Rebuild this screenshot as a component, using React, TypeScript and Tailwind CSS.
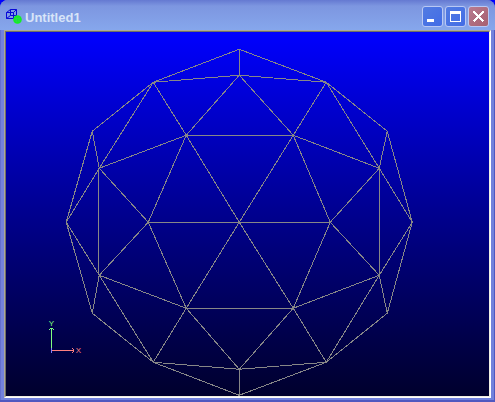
import type { ReactNode } from "react";

type Point = [number, number];

const rim: Point[] = [
  [239, 49], [326, 82], [387, 131], [412, 222], [387, 313], [326, 362],
  [239, 395], [153, 362], [92, 313], [66, 222], [92, 131], [153, 82], [239, 49],
];

const edges: [Point, Point][] = [
  [[239, 49], [239, 75]],
  [[153, 82], [239, 75]],
  [[326, 82], [239, 75]],
  [[239, 75], [186, 135]],
  [[239, 75], [293, 135]],
  [[153, 82], [186, 135]],
  [[326, 82], [293, 135]],
  [[186, 135], [293, 135]],
  [[153, 82], [99, 168]],
  [[326, 82], [379, 168]],
  [[92, 131], [99, 168]],
  [[387, 131], [379, 168]],
  [[99, 168], [186, 135]],
  [[379, 168], [293, 135]],
  [[98, 168], [98, 275]],
  [[379, 168], [379, 275]],
  [[99, 168], [66, 222]],
  [[379, 168], [412, 222]],
  [[99, 168], [148, 222]],
  [[379, 168], [330, 222]],
  [[186, 135], [148, 222]],
  [[293, 135], [330, 222]],
  [[186, 135], [239, 222]],
  [[293, 135], [239, 222]],
  [[148, 222], [330, 222]],
  [[66, 222], [99, 275]],
  [[412, 222], [379, 275]],
  [[148, 222], [99, 275]],
  [[330, 222], [379, 275]],
  [[148, 222], [186, 308]],
  [[330, 222], [293, 308]],
  [[239, 222], [186, 308]],
  [[239, 222], [293, 308]],
  [[99, 275], [92, 313]],
  [[379, 275], [387, 313]],
  [[99, 275], [186, 308]],
  [[379, 275], [293, 308]],
  [[99, 275], [153, 362]],
  [[379, 275], [326, 362]],
  [[186, 308], [293, 308]],
  [[186, 308], [153, 362]],
  [[293, 308], [326, 362]],
  [[186, 308], [239, 369]],
  [[293, 308], [239, 369]],
  [[153, 362], [239, 369]],
  [[326, 362], [239, 369]],
  [[239, 369], [239, 395]],
];

function DocumentIcon() {
  return (
    <svg className="size-4 shrink-0" viewBox="0 0 16 16" aria-hidden="true">
      <path
        d="M.5 4.5h7v6h-7zM4.5 1.5h6v6h-6zM.5 4.5l4-3M7.5 4.5l3-3M.5 10.5l4-3M7.5 10.5l3-3"
        fill="none"
        stroke="#0808d8"
      />
      <circle cx="11.5" cy="11.5" r="4.3" fill="#12f022" />
      <path d="M9 10.5h5M9 13h5M10.5 9v5M13 9v5" stroke="#45b878" strokeWidth=".4" fill="none" />
    </svg>
  );
}

function CaptionButton({ label, close = false, children }: { label: string; close?: boolean; children: ReactNode }) {
  return (
    <button
      type="button"
      aria-label={label}
      className={
        "size-[21px] rounded-[3px] border border-[#b9c8f4] " +
        (close
          ? "bg-linear-to-br from-[#b87b90] to-[#a75f70]"
          : "bg-linear-to-br from-[#527be2] to-[#426ce6]")
      }
    >
      <svg className="size-[19px]" viewBox="0 0 19 19" shapeRendering="crispEdges" aria-hidden="true">
        {children}
      </svg>
    </button>
  );
}

function Viewport() {
  return (
    <svg
      className="block min-h-0 w-full flex-1 bg-linear-to-b from-[#0000ff] to-[#00002d]"
      viewBox="6 32 483 364"
      role="img"
      aria-label="Wireframe sphere"
    >
      <g transform="translate(.25 .25)" stroke="#878787" fill="none" shapeRendering="crispEdges">
        <polyline points={rim.map((p) => p.join(",")).join(" ")} />
        {edges.map(([a, b]) => (
          <line key={`${a}-${b}`} x1={a[0]} y1={a[1]} x2={b[0]} y2={b[1]} />
        ))}
      </g>
      <g shapeRendering="crispEdges">
        <path d="M51 328h1v20h-1zM50 328h3v1h-3zM49 329h1v1h-1zM53 329h1v1h-1z" fill="#80ff80" />
        <path d="M51 348h1v5h-1z" fill="#8080ff" />
        <path d="M52 350h22v1h-22zM73 349h1v3h-1zM72 348h1v1h-1zM72 352h1v1h-1z" fill="#ff8080" />
      </g>
      <g className="font-['Liberation_Sans',sans-serif] text-[8px]" textAnchor="middle">
        <text x="51.5" y="326" fill="#80ff80">Y</text>
        <text x="78.5" y="353" fill="#ff8080">X</text>
      </g>
    </svg>
  );
}

export default function App() {
  return (
    <div className="h-screen bg-[#0000ff]">
      <main className="flex h-full flex-col rounded-t-lg border-b-2 border-[#5058c0] bg-[#7382dc] px-1 pb-0.5 shadow-[inset_1px_0_#6470d0,inset_-1px_0_#5058c0]">
        <header className="-mx-1 flex h-[30px] shrink-0 items-center gap-0.5 rounded-t-lg bg-linear-to-b from-[#6579d1] via-[#7d96e0] via-20% to-[#86a7ec] pr-1.5 pl-1.5 pt-0.5">
          <DocumentIcon />
          <h1 className="min-w-0 flex-1 truncate pl-px pt-1 font-['Liberation_Sans',sans-serif] text-[13px] leading-4 font-bold text-[#d8e4f8]">
            Untitled1
          </h1>
          <div className="flex gap-0.5 pt-px">
            <CaptionButton label="Minimize">
              <path d="M4 12h7v3H4z" fill="#fff" />
            </CaptionButton>
            <CaptionButton label="Maximize">
              <path d="M4 4h11v11H4zM5 7v7h9V7z" fill="#fff" fillRule="evenodd" />
            </CaptionButton>
            <CaptionButton label="Close" close>
              <path d="M4.5 4.5l10 10M14.5 4.5l-10 10" stroke="#fff" strokeWidth="2.2" />
            </CaptionButton>
          </div>
        </header>
        <div className="flex min-h-0 flex-1 flex-col border border-t-[#aca899] border-r-white border-b-white border-l-[#aca899]">
          <div className="flex min-h-0 flex-1 flex-col border border-t-[#716f64] border-r-[#f1efe2] border-b-[#f1efe2] border-l-[#716f64]">
            <Viewport />
          </div>
        </div>
      </main>
    </div>
  );
}
